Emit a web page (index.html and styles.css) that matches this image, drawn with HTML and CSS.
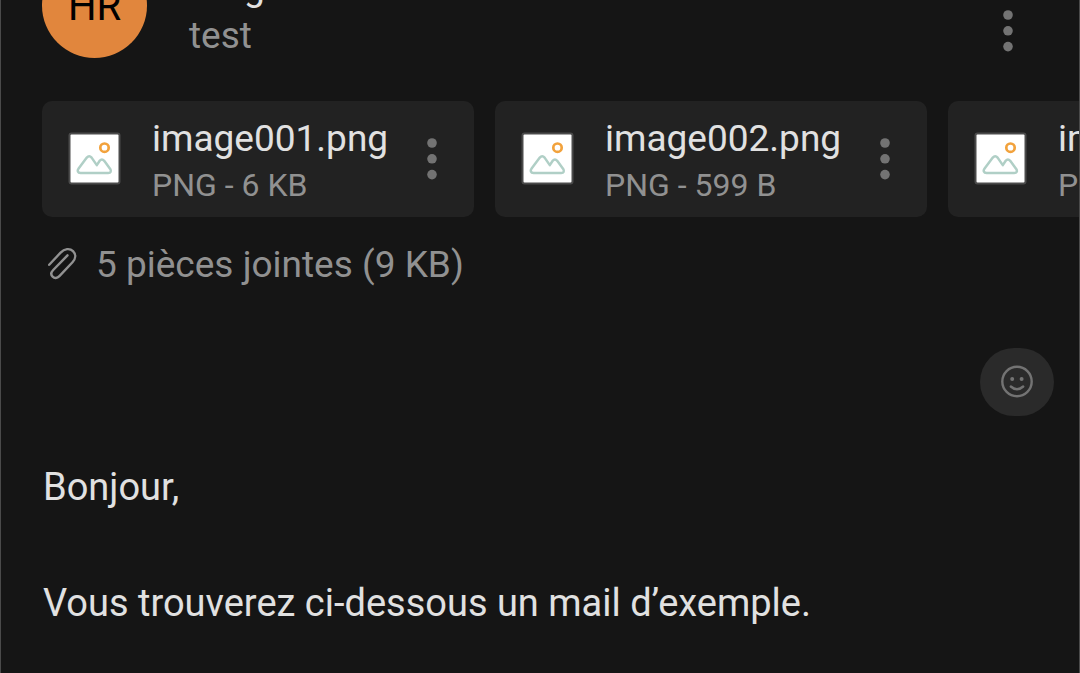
FILE: index.html
```html
<!DOCTYPE html>
<html lang="fr">
<head>
<meta charset="utf-8">
<title>test</title>
<link rel="stylesheet" href="styles.css">
</head>
<body>
<svg class="defs" aria-hidden="true">
  <symbol id="dots" viewBox="0 0 12 44">
    <circle cx="6" cy="6" r="4.8"/><circle cx="6" cy="21.800" r="4.8"/><circle cx="6" cy="37.600" r="4.8"/>
  </symbol>
  <symbol id="picture" viewBox="0 0 54 54">
    <rect x="0.500" y="0.500" width="52" height="52" rx="3" fill="#4b4b4b"/>
    <rect x="2.500" y="2.500" width="48" height="48" rx="1" fill="#fff"/>
    <circle cx="36.500" cy="15.700" r="4.200" fill="none" stroke="#f2a23c" stroke-width="2.700"/>
    <path d="M12.600 41C9.600 41 9 38.500 10.600 36.400L18.800 25.600Q21.200 22.800 23.600 25.600L28.800 33.100L31.700 28.800Q33.900 26.200 36.200 28.800L42.200 36.900C43.600 39.100 42.800 41 40.200 41Z" fill="none" stroke="#b0cfc6" stroke-width="2.500" stroke-linejoin="round"/>
  </symbol>
</svg>
<main class="message">
  <header class="header">
    <div class="avatar">HR</div>
    <div class="sender">
      <div class="name">Heig</div>
      <div class="recipient">test</div>
    </div>
    <button class="more" type="button" aria-label="Plus d’options"><svg><use href="#dots"/></svg></button>
  </header>
  <section class="attachments">
    <article class="card">
      <svg class="thumb"><use href="#picture"/></svg>
      <div class="file"><div class="filename">image001.png</div><div class="meta">PNG - 6 KB</div></div>
      <button class="more" type="button" aria-label="Options de image001.png"><svg><use href="#dots"/></svg></button>
    </article>
    <article class="card">
      <svg class="thumb"><use href="#picture"/></svg>
      <div class="file"><div class="filename">image002.png</div><div class="meta">PNG - 599 B</div></div>
      <button class="more" type="button" aria-label="Options de image002.png"><svg><use href="#dots"/></svg></button>
    </article>
    <article class="card">
      <svg class="thumb"><use href="#picture"/></svg>
      <div class="file"><div class="filename">image003.png</div><div class="meta">PNG - 1 KB</div></div>
      <button class="more" type="button" aria-label="Options de image003.png"><svg><use href="#dots"/></svg></button>
    </article>
  </section>
  <div class="summary">
    <svg class="clip" viewBox="0 0 32 36"><path d="M2.200 17.800L13.600 5.600C17.400 1.600 22.800 .9 26 4.100C29.200 7.300 28.800 11.700 25.500 15.200L12.400 29.100C10.100 31.600 7.200 31.300 5.600 29.700C3.900 28 4 25.300 6.200 23L20.500 8.300"/></svg>
    <span>5 pièces jointes (9 KB)</span>
  </div>
  <div class="reactions">
    <button class="react" type="button" aria-label="Réagir">
      <svg viewBox="0 0 34 34"><circle cx="17" cy="16.500" r="14.700"/><path d="M10.800 21.500Q17 27.100 23.200 21.500"/><circle class="eye" cx="12.200" cy="13.900" r="2"/><circle class="eye" cx="21.600" cy="13.900" r="2"/></svg>
    </button>
  </div>
  <div class="body">
    <p>Bonjour,</p>
    <p>Vous trouverez ci-dessous un mail d’exemple.</p>
  </div>
</main>
</body>
</html>
```
FILE: styles.css
```css
* { box-sizing: border-box; }
body {
  margin: 0;
  overflow: hidden;
  background: #151515;
  color: #e1e1e1;
  font: 37px/44px Roboto, sans-serif;
}
button { padding: 0; border: 0; background: none; font: inherit; color: inherit; }
p { margin: 0; }
.defs { position: absolute; width: 0; height: 0; }
.message {
  min-height: 100vh;
  overflow: hidden;
  border: solid #4a4a4a;
  border-width: 0 1px;
}
.header {
  display: flex;
  align-items: flex-end;
  margin-top: -47px;
  padding: 0 65px 0 41px;
}
.avatar {
  width: 105px;
  height: 105px;
  border-radius: 50%;
  background: #e1863d;
  color: #000;
  font-size: 40px;
  line-height: 108px;
  text-align: center;
}
.sender { flex: 1; margin-left: 42px; }
.name { margin-bottom: 4px; }
.recipient { color: #919191; }
.more { display: flex; width: 12px; height: 44px; color: #737373; }
.more svg { width: 12px; height: 44px; fill: currentColor; }
.header .more { margin-bottom: 5px; }
.attachments {
  display: flex;
  gap: 21px;
  margin-top: 43px;
  padding-left: 41px;
}
.card {
  display: flex;
  flex: 0 0 432px;
  align-items: center;
  height: 116px;
  padding: 0 36px 0 26px;
  border-radius: 10px;
  background: #222;
}
.thumb { flex: none; width: 54px; height: 54px; }
.file { flex: 1; margin-left: 30px; padding-top: 8px; }
.meta { color: #919191; font-size: 32px; line-height: 48px; }
.summary {
  display: flex;
  align-items: center;
  gap: 17px;
  margin-top: 26px;
  padding-left: 46px;
  color: #919191;
}
.clip { width: 32px; height: 36px; fill: none; stroke: currentColor; stroke-width: 2.4; stroke-linecap: round; stroke-linejoin: round; }
.reactions { display: flex; justify-content: flex-end; margin-top: 61px; padding-right: 25px; }
.react {
  display: grid;
  place-items: center;
  width: 74px;
  height: 68px;
  border-radius: 34px;
  background: #2a2a2a;
  color: #737373;
}
.react svg { width: 34px; height: 34px; fill: none; stroke: currentColor; stroke-width: 2.4; stroke-linecap: round; }
.react .eye { fill: currentColor; stroke: none; }
.body { display: grid; gap: 72px; margin-top: 49px; padding-left: 42px; font-size: 38px; }
```
